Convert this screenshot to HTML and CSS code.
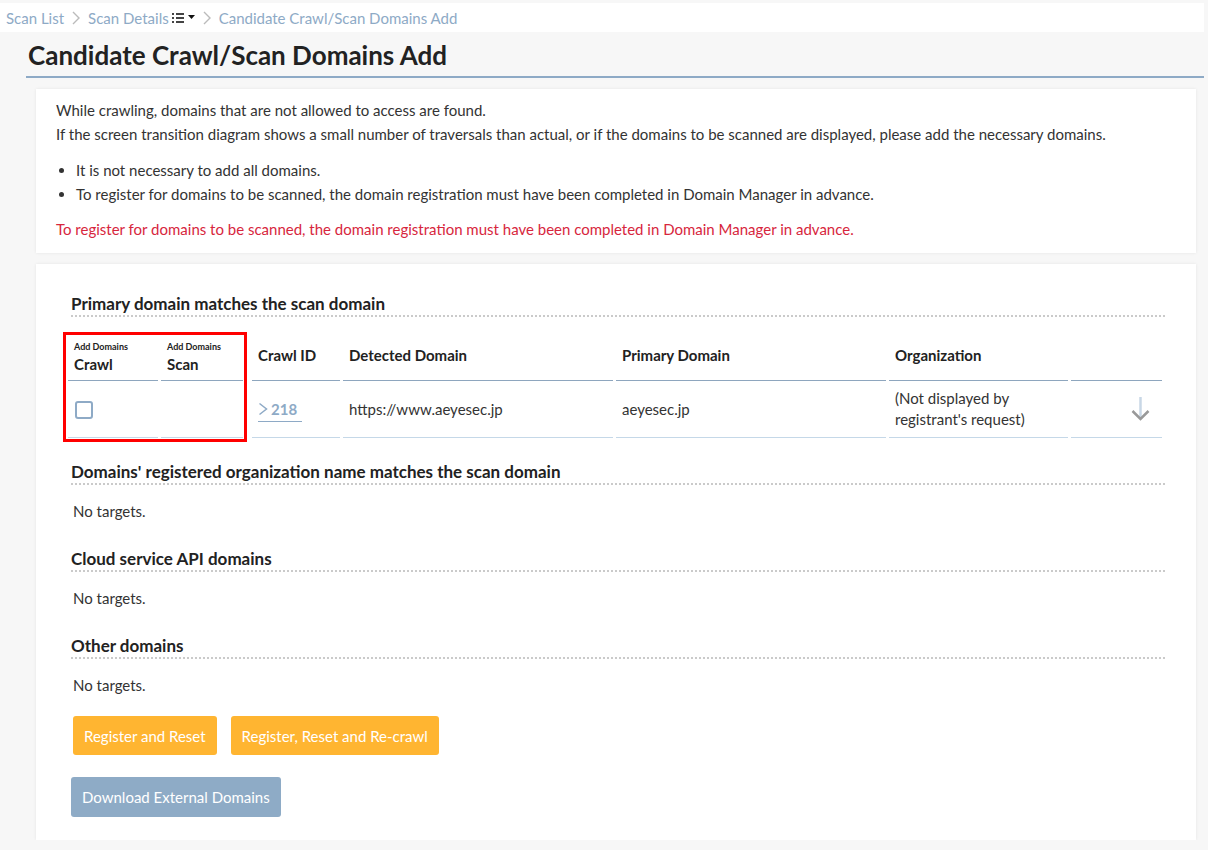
FILE: index.html
```html
<!DOCTYPE html>
<html lang="en">
<head>
    <meta charset="UTF-8">
    <meta name="viewport" content="width=device-width, initial-scale=1.0">
    <title>Candidate Crawl/Scan Domains Add</title>
    <link rel="stylesheet" href="styles.css">
</head>
<body>
    <nav class="breadcrumb">
        <a href="#">Scan List</a>
        <svg class="sep" width="8" height="14" viewBox="0 0 8 14"><path d="M1 1 L7 7 L1 13" fill="none" stroke="#bbb" stroke-width="1.4"/></svg>
        <a href="#">Scan Details</a>
        <svg class="menu-icon" width="24" height="12" viewBox="0 0 24 12">
            <rect x="0" y="1" width="2" height="2" fill="#444"/>
            <rect x="0" y="5" width="2" height="2" fill="#444"/>
            <rect x="0" y="9" width="2" height="2" fill="#444"/>
            <rect x="4" y="1" width="8" height="2" fill="#444"/>
            <rect x="4" y="5" width="8" height="2" fill="#444"/>
            <rect x="4" y="9" width="8" height="2" fill="#444"/>
            <path d="M16 3 L23 3 L19.5 7 Z" fill="#111"/>
        </svg>
        <svg class="sep" width="8" height="14" viewBox="0 0 8 14"><path d="M1 1 L7 7 L1 13" fill="none" stroke="#bbb" stroke-width="1.4"/></svg>
        <span class="current">Candidate Crawl/Scan Domains Add</span>
    </nav>

    <h1 class="page-title">Candidate Crawl/Scan Domains Add</h1>

    <div class="card notes">
        <p>While crawling, domains that are not allowed to access are found.</p>
        <p>If the screen transition diagram shows a small number of traversals than actual, or if the domains to be scanned are displayed, please add the necessary domains.</p>
        <ul>
            <li>It is not necessary to add all domains.</li>
            <li>To register for domains to be scanned, the domain registration must have been completed in Domain Manager in advance.</li>
        </ul>
        <p class="warning">To register for domains to be scanned, the domain registration must have been completed in Domain Manager in advance.</p>
    </div>

    <div class="card domains">
        <h2 class="section-title">Primary domain matches the scan domain</h2>
        <div class="table-wrap">
            <div class="highlight"></div>
            <table class="domain-table">
                <colgroup>
                    <col class="col-crawl">
                    <col class="col-scan">
                    <col class="col-gap">
                    <col class="col-id">
                    <col class="col-detected">
                    <col class="col-primary">
                    <col class="col-org">
                    <col class="col-action">
                </colgroup>
                <thead>
                    <tr>
                        <th class="two-line"><small>Add Domains</small>Crawl</th>
                        <th class="two-line"><small>Add Domains</small>Scan</th>
                        <th class="gap"></th>
                        <th>Crawl ID</th>
                        <th>Detected Domain</th>
                        <th>Primary Domain</th>
                        <th>Organization</th>
                        <th></th>
                    </tr>
                </thead>
                <tbody>
                    <tr>
                        <td><input type="checkbox" class="check"></td>
                        <td></td>
                        <td class="gap"></td>
                        <td>
                            <a href="#" class="crawl-link">
                                <svg width="10" height="14" viewBox="0 0 10 14"><path d="M1.5 1.5 L8.5 7 L1.5 12.5" fill="none" stroke="#8eaac6" stroke-width="1.5"/></svg>
                                218
                            </a>
                        </td>
                        <td>https://www.aeyesec.jp</td>
                        <td>aeyesec.jp</td>
                        <td>(Not displayed by registrant's request)</td>
                        <td class="action">
                            <svg width="19" height="25" viewBox="0 0 19 25">
                                <path d="M9.5 0 V22" fill="none" stroke="#c8d7e6" stroke-width="2.5"/>
                                <path d="M1.5 14 L9.5 22 L17.5 14" fill="none" stroke="#999" stroke-width="2.5"/>
                            </svg>
                        </td>
                    </tr>
                </tbody>
            </table>
        </div>

        <h2 class="section-title">Domains' registered organization name matches the scan domain</h2>
        <p class="empty">No targets.</p>

        <h2 class="section-title">Cloud service API domains</h2>
        <p class="empty">No targets.</p>

        <h2 class="section-title">Other domains</h2>
        <p class="empty">No targets.</p>

        <div class="actions">
            <button class="btn btn-warning">Register and Reset</button>
            <button class="btn btn-warning">Register, Reset and Re-crawl</button>
        </div>
        <div class="actions">
            <button class="btn btn-secondary">Download External Domains</button>
        </div>
    </div>
</body>
</html>
```

FILE: styles.css
```css
body {
    font-family: Lato, "Noto Sans", sans-serif;
    font-size: 15px;
    color: #333;
    background-color: #f7f7f7;
    margin: 0;
    padding: 0 4px 0 0;
}

.breadcrumb {
    background-color: #fff;
    height: 29px;
    margin-top: 3px;
    padding: 0 0 0 6px;
    box-sizing: border-box;
    display: flex;
    align-items: center;
    font-size: 15px;
    color: #8eaac6;
}

.breadcrumb a,
.breadcrumb .current {
    color: #8eaac6;
    text-decoration: none;
}

.breadcrumb .sep {
    margin: 0 8px 0 8px;
}

.menu-icon {
    margin: 0 -1px 0 3px;
}

.page-title {
    font-size: 26px;
    font-weight: bold;
    color: #222;
    margin: 0 0 0 26px;
    padding: 7px 0 5px 2px;
    border-bottom: 2px solid #8eaac6;
}

.card {
    background-color: #fff;
    margin: 0 8px 0 36px;
    box-shadow: 0 0 3px rgba(0, 0, 0, 0.08);
}

.notes {
    margin-top: 11px;
    padding: 9px 20px 12px 20px;
    line-height: 24px;
}

.notes p {
    margin: 0;
}

.notes ul {
    margin: 12px 0 11px 0;
    padding-left: 20px;
}

.notes .warning {
    color: #d7263d;
}

.domains {
    margin-top: 11px;
    padding: 29px 31px 23px 35px;
}

.section-title {
    font-size: 17px;
    font-weight: bold;
    line-height: 22px;
    color: #222;
    margin: 0;
    padding-bottom: 0;
    border-bottom: 2px dotted #cacaca;
}

.table-wrap {
    position: relative;
    margin: 12px 0 0 -6px;
}

.highlight {
    position: absolute;
    left: -2px;
    top: 3px;
    width: 184px;
    height: 110px;
    box-sizing: border-box;
    border: 3px solid #f00;
    pointer-events: none;
}

.domain-table {
    width: 100%;
    table-layout: fixed;
    border-collapse: separate;
    border-spacing: 3px 0;
}

.col-crawl { width: 90px; }
.col-scan { width: 82px; }
.col-gap { width: 3px; }
.col-id { width: 88px; }
.col-detected { width: 270px; }
.col-primary { width: 270px; }
.col-org { width: 179px; }

.domain-table th {
    text-align: left;
    font-weight: bold;
    color: #222;
    vertical-align: middle;
    padding: 0 6px;
    height: 52px;
    box-sizing: border-box;
    border-bottom: 1px solid #8ea6be;
    line-height: 20px;
}

.domain-table th.two-line {
    padding-top: 3px;
}

.domain-table th small {
    display: block;
    font-size: 9px;
    line-height: 12px;
    margin: 2px 0 1px 0;
}

.domain-table .gap {
    border-bottom: none;
    padding: 0;
}

.domain-table td {
    padding: 0 6px;
    height: 57px;
    box-sizing: border-box;
    border-bottom: 1px solid #c5d8e8;
    color: #333;
    line-height: 21px;
    vertical-align: middle;
}

.check {
    appearance: none;
    width: 18px;
    height: 18px;
    margin: 1px 0 0 1px;
    border: 2px solid #8eaac6;
    border-radius: 3px;
    display: block;
}

.crawl-link {
    display: inline-flex;
    align-items: center;
    gap: 3px;
    color: #8eaac6;
    font-weight: bold;
    text-decoration: none;
    border-bottom: 1px solid #8eaac6;
    padding: 0 5px 1px 0;
    margin-top: 2px;
}

.action {
    text-align: right;
    padding-right: 12px !important;
}

.action svg {
    display: inline-block;
    vertical-align: middle;
}

.table-wrap + .section-title {
    margin-top: 23px;
}

.empty {
    margin: 14px 0 0 2px;
    line-height: 24px;
    color: #333;
}

.empty + .section-title {
    margin-top: 25px;
}

.actions {
    display: flex;
    gap: 14px;
    margin: 19px 0 0 2px;
}

.actions + .actions {
    margin: 22px 0 0 0;
}

.btn {
    font-family: inherit;
    font-size: 15px;
    color: #fff;
    border: none;
    border-radius: 3px;
    padding: 0 11px;
    height: 39px;
    cursor: pointer;
}

.btn-warning {
    background-color: #ffb531;
}

.btn-secondary {
    height: 40px;
    background-color: #8eabc6;
}
```
